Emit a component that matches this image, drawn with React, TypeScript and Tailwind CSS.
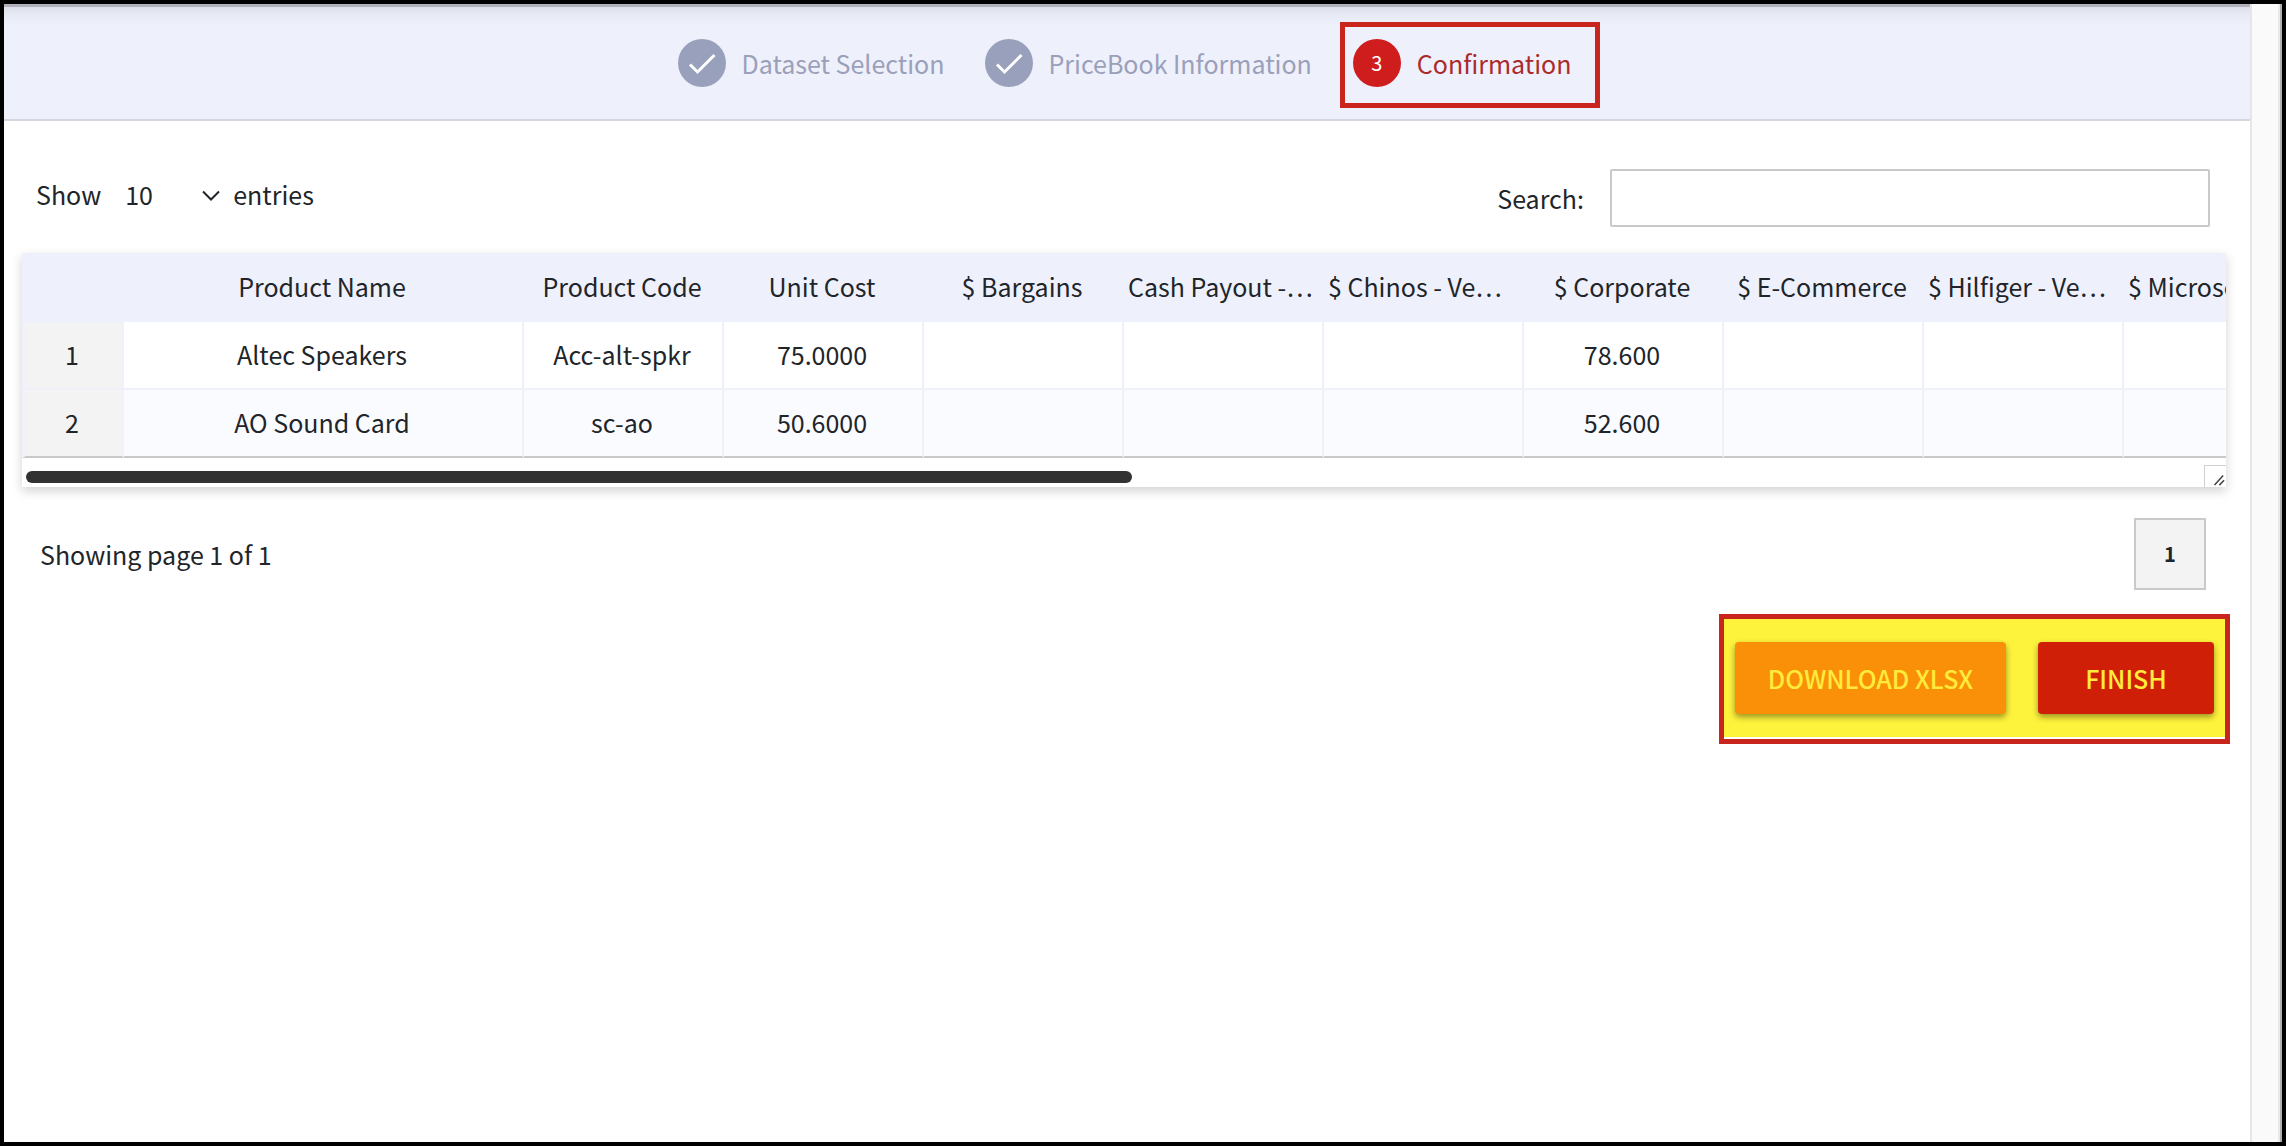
import React from 'react';

const COLUMNS = [
  { label: 'Product Name', style: 'w-[400px] text-center' },
  { label: 'Product Code', style: 'w-[200px] text-center' },
  { label: 'Unit Cost', style: 'w-[200px] text-center' },
  { label: '$ Bargains', style: 'w-[200px] text-center' },
  { label: 'Cash Payout -…', style: 'w-[200px] text-left' },
  { label: '$ Chinos - Ve…', style: 'w-[200px] text-left' },
  { label: '$ Corporate', style: 'w-[200px] text-center' },
  { label: '$ E-Commerce', style: 'w-[200px] text-center' },
  { label: '$ Hilfiger - Ve…', style: 'w-[200px] text-left' },
  { label: '$ Microsoft - …', style: 'w-[200px] text-left' },
];

const ROWS = [
  ['Altec Speakers', 'Acc-alt-spkr', '75.0000', '', '', '', '78.600', '', '', ''],
  ['AO Sound Card', 'sc-ao', '50.6000', '', '', '', '52.600', '', '', ''],
];

const DoneStep: React.FC<{ label: string }> = ({ label }) => (
  <li className="flex items-center gap-4 pb-1 text-[#9aa0b9]">
    <span className="flex size-12 items-center justify-center rounded-full bg-[#98a0bb]">
      <svg viewBox="0 0 48 48" className="size-12" fill="none" stroke="#fff" strokeWidth="3" aria-hidden="true">
        <path d="M12 25.5 L19.5 33 L36.5 16" />
      </svg>
    </span>
    {label}
  </li>
);

const Stepper: React.FC = () => (
  <header className="h-[117px] border-b-2 border-[#d6d7de] bg-[#eef0fc] bg-[linear-gradient(to_bottom,#b0b1bb_0,#b0b1bb_3px,#dcdee8_3px,#e8eaf6_11px,#eef0fc_22px)]">
    <ol className="flex items-center justify-center gap-10 pt-[18px] pl-6">
      <DoneStep label="Dataset Selection" />
      <DoneStep label="PriceBook Information" />
      <li className="-ml-3 flex h-[86px] items-center gap-4 border-5 border-[#c9251c] pr-6 pb-1 pl-2 text-[#ab2a2a]">
        <span className="flex size-12 items-center justify-center rounded-full bg-[#cf1d1d] text-xl text-white">3</span>
        Confirmation
      </li>
    </ol>
  </header>
);

const Toolbar: React.FC = () => (
  <div className="flex items-center justify-between pt-12 pr-10 pl-8">
    <div className="flex items-center pb-2">
      <label htmlFor="page-size">Show</label>
      <div className="relative ml-4">
        <select id="page-size" className="h-12 w-[116px] appearance-none bg-transparent pl-2 outline-none">
          <option>10</option>
        </select>
        <svg viewBox="0 0 20 12" className="pointer-events-none absolute top-5 right-3 h-3 w-5" fill="none" stroke="#212529" strokeWidth="2" aria-hidden="true">
          <path d="M2 1.5 L10 9.5 L18 1.5" />
        </svg>
      </div>
      <span>entries</span>
    </div>
    <div className="flex items-center gap-[26px]">
      <label htmlFor="search">Search:</label>
      <input id="search" type="text" className="h-[58px] w-[600px] rounded-xs border-2 border-[#c9c9c9] bg-white px-4 outline-none" />
    </div>
  </div>
);

const PriceTable: React.FC = () => (
  <div className="mt-[26px] mr-6 ml-[18px] overflow-hidden bg-white shadow-[0_4px_10px_rgba(0,0,0,0.18)]">
    <table className="w-[2302px] table-fixed border-separate border-spacing-0 text-center">
      <thead>
        <tr className="h-[69px] bg-[#eef0fc]">
          <th className="w-[102px]" aria-label="Row" />
          {COLUMNS.map((col) => (
            <th key={col.label} className={`${col.style} overflow-hidden pr-2 pb-1 pl-1 font-normal whitespace-nowrap`}>
              {col.label}
            </th>
          ))}
        </tr>
      </thead>
      <tbody>
        {ROWS.map((row, index) => {
          const isLast = index === ROWS.length - 1;
          const line = isLast ? 'border-b-[#c9c9c9]' : 'border-b-[#eff0f9]';
          return (
            <tr key={row[0]} className={`h-[68px] ${isLast ? 'bg-[#fafbff]' : 'bg-white'}`}>
              <td className={`border-r-2 border-b-2 border-l-4 border-x-[#f0f1fa] bg-[#f3f3f3] pr-1 pb-0.5 ${line}`}>{index + 1}</td>
              {row.map((value, i) => (
                <td key={i} className={`border-r-2 border-b-2 border-r-[#eff0f9] pr-0.5 pb-0.5 ${line}`}>{value}</td>
              ))}
            </tr>
          );
        })}
      </tbody>
    </table>

    {/* Scroll bar and resize grip */}
    <div className="flex h-[29px] justify-between">
      <div className="mt-[13px] ml-1 h-3 w-[50.2%] rounded-full bg-[#323232]"></div>
      <div className="mt-[7px] size-[22px] border-t border-l border-[#d0d0d0]">
        <svg viewBox="0 0 22 22" className="size-full" stroke="#444" strokeWidth="1.6" aria-hidden="true">
          <path d="M10 20 L19 10 M15 20 L20 15" />
        </svg>
      </div>
    </div>
  </div>
);

const App: React.FC = () => {
  return (
    <div className="flex h-screen border-4 border-black bg-white font-['Noto_Sans_CJK_KR',sans-serif] text-[25px] leading-9 text-[#212529]">
      <main className="min-w-0 flex-1">
        <Stepper />
        <Toolbar />
        <PriceTable />

        <div className="mt-[31px] flex items-center justify-between pr-11 pl-9">
          <p>Showing page 1 of 1</p>
          <button className="size-[72px] border-2 border-[#c9c9c9] bg-[#f3f3f3] text-xl font-bold">1</button>
        </div>

        <div className="mt-6 mr-5 ml-auto w-fit border-5 border-[#c9251c] bg-white pb-0.5">
          <div className="flex h-[118px] items-start gap-8 bg-[#fef33c] px-[11px] pt-[23px] font-medium text-[#ffeb3b]">
            <button className="h-[72px] w-[271px] rounded-sm bg-[#f99008] shadow-[0_3px_6px_rgba(0,0,0,0.4)]">DOWNLOAD XLSX</button>
            <button className="h-[72px] w-44 rounded-sm bg-[#cf1f06] shadow-[0_3px_6px_rgba(0,0,0,0.4)]">FINISH</button>
          </div>
        </div>
      </main>

      <aside className="w-8 border-r-2 border-l-2 border-r-[#b0b0b0] border-l-[#e6e6e8] bg-[#fafafa]">
        <div className="ml-auto h-full w-0.5 bg-[#e9e9e9]"></div>
      </aside>
    </div>
  );
};

export default App;
